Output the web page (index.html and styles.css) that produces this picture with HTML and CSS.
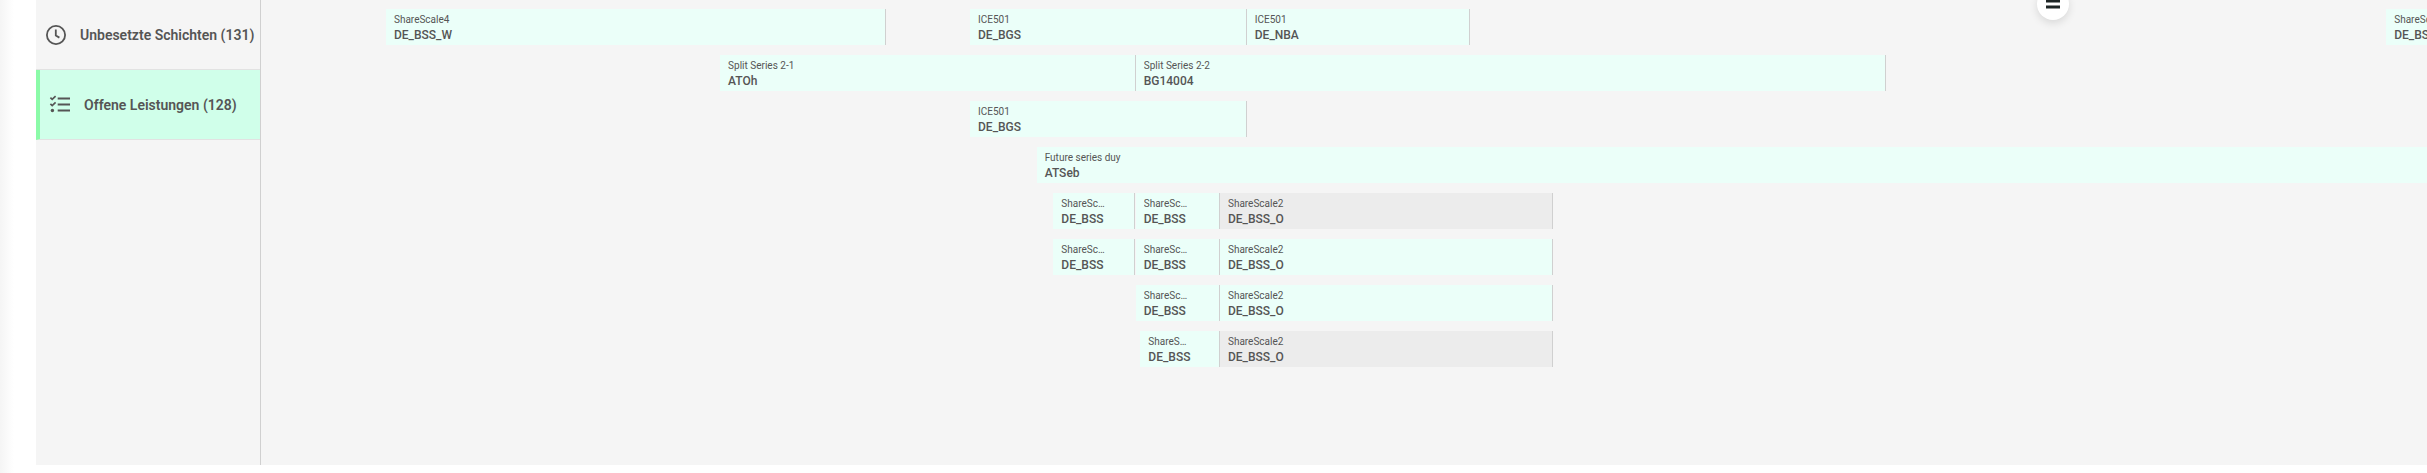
FILE: index.html
```
<!DOCTYPE html>
<html lang="de">
<head>
    <meta charset="UTF-8">
    <meta name="viewport" content="width=device-width, initial-scale=1.0">
    <title>Offene Leistungen</title>
    <link rel="stylesheet" href="styles.css">
</head>
<body>
    <div class="Planner">
        <nav class="Sidebar">
            <button type="button" class="Sidebar-Item">
                <svg class="Sidebar-Icon" viewBox="0 0 24 24" fill="none" stroke="currentColor" stroke-width="1.8" aria-hidden="true">
                    <circle cx="12" cy="12" r="9.1"/>
                    <path d="M11.8 6.4V12.5L15.4 14.6"/>
                </svg>
                <span>Unbesetzte Schichten (131)</span>
            </button>
            <button type="button" class="Sidebar-Item Sidebar-Active">
                <svg class="Sidebar-Icon" viewBox="0 0 24 24" fill="none" stroke="currentColor" stroke-width="2" aria-hidden="true">
                    <path d="M9.7 5.5H22M9.7 11.5H22M9.7 17.5H22"/>
                    <path stroke-width="1.7" d="M2.4 4.7L4.2 6.4L7.6 3.2M2.4 10.9L4.2 12.6L7.6 9.4"/>
                    <circle cx="4.4" cy="17.5" r="1.7" fill="currentColor" stroke="none"/>
                </svg>
                <span>Offene Leistungen (128)</span>
            </button>
        </nav>
        <main class="Timeline" id="Timeline">
            <button type="button" class="Drag-Handle" aria-label="Bereich verschieben">
                <svg class="Drag-Icon" viewBox="0 0 14 10" aria-hidden="true">
                    <path fill="#1d2525" d="M0 .5H14V3.5H0zM0 6.5H14V9.5H0z"/>
                </svg>
            </button>
        </main>
    </div>
    <script src="timeline.js"></script>
</body>
</html>
```
FILE: styles.css
```
body {
    margin: 0;
    font-family: Roboto, sans-serif;
    color: #555555;
    background-color: #ffffff;
}

.Planner {
    display: flex;
    min-height: 100vh;
    box-sizing: border-box;
    padding: 0 0 8px 36px;
    background: linear-gradient(to right, #f5f5f5, #ffffff 14px);
    overflow: hidden;
}

.Sidebar {
    width: 224px;
    flex-shrink: 0;
    background-color: #f5f5f5;
    border-right: 1px solid #d0d0d0;
}

.Sidebar-Item {
    display: flex;
    align-items: center;
    gap: 12px;
    width: 100%;
    height: 70px;
    box-sizing: border-box;
    padding: 0 8px;
    border: none;
    border-bottom: 1px solid #e2e2e2;
    background: none;
    color: inherit;
    font-family: inherit;
    font-size: 14px;
    font-weight: 600;
    white-space: nowrap;
    cursor: pointer;
}

.Sidebar-Active {
    border-left: 4px solid #8bfba8;
    background-color: #d0ffea;
}

.Sidebar-Icon {
    width: 24px;
    height: 24px;
    flex-shrink: 0;
}

.Timeline {
    position: relative;
    flex: 1;
    min-width: 0;
    display: flex;
    flex-direction: column;
    gap: 10px;
    padding: 9px 0;
    background-color: #f5f5f5;
    overflow: hidden;
}

.Row {
    display: flex;
    height: 36px;
}

.Service {
    flex-shrink: 0;
    box-sizing: border-box;
    padding: 4px 28px 0 8px;
    border-right: 1px solid #d0d0d0;
    background-color: #ebfff9;
    white-space: nowrap;
}

.Service-Disabled {
    background-color: #ececec;
}

.Service-Series {
    font-size: 10px;
    line-height: 14px;
    overflow: hidden;
    text-overflow: ellipsis;
}

.Service-Name {
    font-size: 12px;
    font-weight: 500;
    line-height: 16px;
}

.Drag-Handle {
    position: absolute;
    top: -12px;
    left: 82%;
    display: flex;
    align-items: center;
    justify-content: center;
    width: 32px;
    height: 32px;
    padding: 0;
    border: none;
    border-radius: 50%;
    background-color: #ffffff;
    box-shadow: 0 3px 8px rgba(0, 0, 0, 0.12);
    cursor: pointer;
}

.Drag-Icon {
    width: 14px;
    height: 10px;
}
```
FILE: timeline.js
```
// visible range of the timeline in minutes
const RANGE = 39 * 60

const rows = [
    [
        { start: 135, end: 675, series: "ShareScale4", name: "DE_BSS_W" },
        { start: 766, end: 1065, series: "ICE501", name: "DE_BGS" },
        { start: 1065, end: 1306, series: "ICE501", name: "DE_NBA" },
        { start: 2296, end: 2836, series: "ShareScale4", name: "DE_BSS_W" },
    ],
    [
        { start: 496, end: 945, series: "Split Series 2-1", name: "ATOh" },
        { start: 945, end: 1756, series: "Split Series 2-2", name: "BG14004" },
    ],
    [
        { start: 766, end: 1065, series: "ICE501", name: "DE_BGS" },
    ],
    [
        { start: 838, end: 2700, series: "Future series duy", name: "ATSeb" },
    ],
    [
        { start: 856, end: 944, series: "ShareScale2", name: "DE_BSS" },
        { start: 945, end: 1036, series: "ShareScale2", name: "DE_BSS" },
        { start: 1036, end: 1396, series: "ShareScale2", name: "DE_BSS_O", disabled: true },
    ],
    [
        { start: 856, end: 944, series: "ShareScale2", name: "DE_BSS" },
        { start: 945, end: 1036, series: "ShareScale2", name: "DE_BSS" },
        { start: 1036, end: 1396, series: "ShareScale2", name: "DE_BSS_O" },
    ],
    [
        { start: 945, end: 1036, series: "ShareScale2", name: "DE_BSS" },
        { start: 1036, end: 1396, series: "ShareScale2", name: "DE_BSS_O" },
    ],
    [
        { start: 950, end: 1036, series: "ShareScale2", name: "DE_BSS" },
        { start: 1036, end: 1396, series: "ShareScale2", name: "DE_BSS_O", disabled: true },
    ],
]

const toPercent = (minutes) => (minutes / RANGE * 100) + "%"

const createSimpleDiv = (className, content) => {
    const div = document.createElement("div")
    div.className = className
    div.innerText = content
    return div
}

const createService = (item, previousEnd) => {
    const service = document.createElement("div")
    service.className = item.disabled ? "Service Service-Disabled" : "Service"
    service.style.marginLeft = toPercent(item.start - previousEnd)
    service.style.width = toPercent(item.end - item.start)
    service.appendChild(createSimpleDiv("Service-Series", item.series))
    service.appendChild(createSimpleDiv("Service-Name", item.name))
    return service
}

const timeline = document.getElementById("Timeline")

rows.forEach(items => {
    const row = document.createElement("div")
    row.className = "Row"
    let previousEnd = 0
    items.forEach(item => {
        row.appendChild(createService(item, previousEnd))
        previousEnd = item.end
    })
    timeline.appendChild(row)
})
```
